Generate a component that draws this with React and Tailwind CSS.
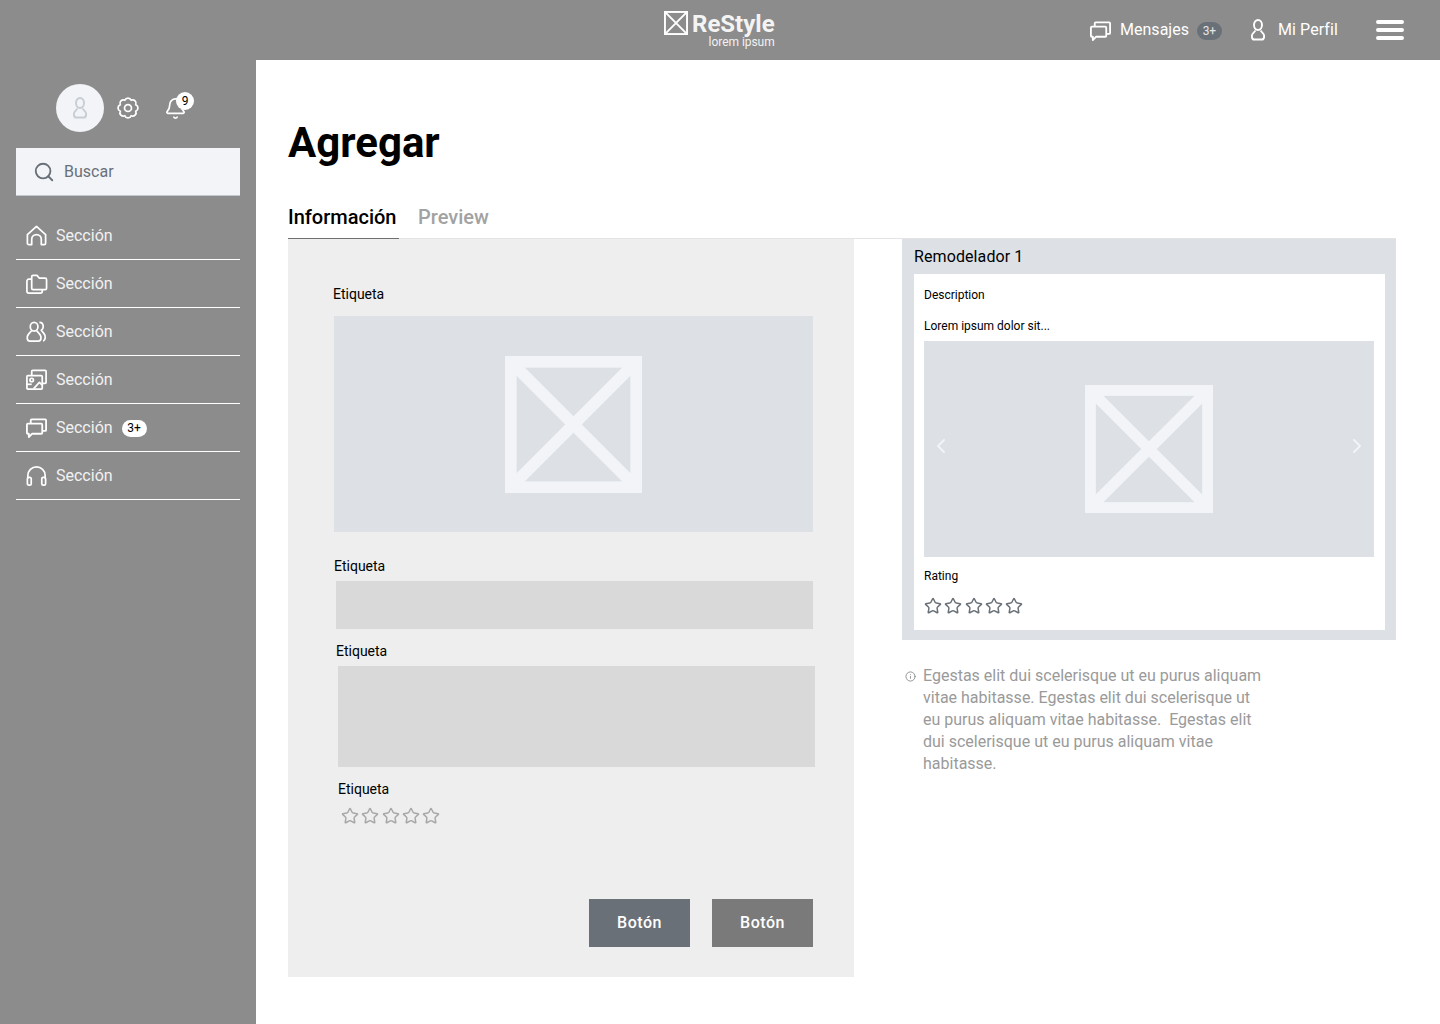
import React from 'react';
import { Search, Bell, ChevronLeft, ChevronRight, Star, Info } from 'lucide-react';

// outline icons from the wireframe kit
const UserIcon = ({ className }) => (
  <svg viewBox="0 0 24 24" fill="none" stroke="currentColor" strokeWidth="1.9" className={className}>
    <ellipse cx="12" cy="7" rx="4" ry="5" />
    <path d="M9.5 12.5 6.5 16c-1 1.3-1 5.5 1.5 5.5h8c2.5 0 2.5-4.2 1.5-5.500L14.500 12.500" strokeLinejoin="round" />
  </svg>
);

const ChatIcon = ({ className }) => (
  <svg viewBox="0 0 24 24" fill="none" stroke="currentColor" strokeWidth="1.9" strokeLinejoin="round" className={className}>
    <path d="M3 8h14a1 1 0 0 1 1 1v8.500a1 1 0 0 1-1 1H7.500L4 22v-3.500H3a1 1 0 0 1-1-1V9a1 1 0 0 1 1-1Z" />
    <path d="M6 8V4.500a1 1 0 0 1 1-1h14a1 1 0 0 1 1 1v10a1 1 0 0 1-1 1h-3" />
  </svg>
);

const HouseIcon = ({ className }) => (
  <svg viewBox="0 0 24 24" fill="none" stroke="currentColor" strokeWidth="1.8" strokeLinejoin="round" className={className}>
    <path d="M2.500 11 12 2.500 21.500 11v9a1.500 1.500 0 0 1-1.500 1.500h-3V16a5 5 0 0 0-10 0v5.500H4A1.500 1.500 0 0 1 2.500 20Z" />
  </svg>
);

const FolderIcon = ({ className }) => (
  <svg viewBox="0 0 24 24" fill="none" stroke="currentColor" strokeWidth="1.8" strokeLinejoin="round" className={className}>
    <path d="M7 5a1.500 1.500 0 0 1 1.500-1.500h4l2.500 3h6a1.500 1.500 0 0 1 1.500 1.500v9a1.500 1.500 0 0 1-1.500 1.500H8.500A1.500 1.500 0 0 1 7 17Z" />
    <path d="M7 7.500H4a2 2 0 0 0-2 2V20a2 2 0 0 0 2 2h12a2 2 0 0 0 2-2v-1.500" />
  </svg>
);

const UsersIcon = ({ className }) => (
  <svg viewBox="0 0 24 24" fill="none" stroke="currentColor" strokeWidth="1.800" strokeLinejoin="round" className={className}>
    <ellipse cx="9.500" cy="7" rx="4" ry="4.500" />
    <path d="M7 11 3.500 15c-2 2.500-1.500 7 1.500 7h9c3 0 3.500-4.500 1.500-7L12 11" />
    <path d="M15 2.500c2.500 0 4 2 4 4.500 0 1.500-.8 3-2 3.700l3 3.800c1.800 2.300 1.500 6.500-1 7.500" />
  </svg>
);

const GalleryIcon = ({ className }) => (
  <svg viewBox="0 0 24 24" fill="none" stroke="currentColor" strokeWidth="1.800" strokeLinejoin="round" className={className}>
    <path d="M7 8V3.500a1 1 0 0 1 1-1h13a1 1 0 0 1 1 1V15a1 1 0 0 1-1 1h-3" />
    <rect x="2" y="8" width="16" height="14" rx="1" />
    <circle cx="7" cy="12.500" r="1.800" />
    <path d="M9 21.500 15 15l3 3" />
    <path d="M2 17h5" />
  </svg>
);

const HeadsetIcon = ({ className }) => (
  <svg viewBox="0 0 24 24" fill="none" stroke="currentColor" strokeWidth="1.800" strokeLinejoin="round" className={className}>
    <path d="M3 15v-3a9 9 0 0 1 18 0v3" />
    <rect x="2.500" y="14" width="4" height="8" rx="1.500" />
    <rect x="17.500" y="14" width="4" height="8" rx="1.500" />
  </svg>
);

// eight lobed cog, the lucide one has square teeth
const gearPath = () => {
  const pts = [...Array(8)].map((_, i) => {
    const a = (i * Math.PI) / 4 + Math.PI / 8;
    return [12 + 9.200 * Math.cos(a), 12 + 9.200 * Math.sin(a)];
  });
  const arcs = [...pts.slice(1), pts[0]].map(p => `A3.800 3.800 0 0 1 ${p[0].toFixed(2)} ${p[1].toFixed(2)}`);
  return `M${pts[0][0].toFixed(2)} ${pts[0][1].toFixed(2)}${arcs.join('')}Z`;
};

const GearIcon = ({ className }) => (
  <svg viewBox="0 0 24 24" fill="none" stroke="currentColor" strokeWidth="1.900" className={className}>
    <path d={gearPath()} />
    <circle cx="12" cy="12" r="3.800" />
  </svg>
);

const Placeholder = ({ size, stroke, color, className }) => (
  <svg viewBox="0 0 100 100" width={size} height={size} fill="none" stroke={color} strokeWidth={stroke} className={className}>
    <rect x={stroke / 2} y={stroke / 2} width={100 - stroke} height={100 - stroke} />
    <path d="M0 0 100 100M100 0 0 100" />
  </svg>
);

const Stars = ({ className }) => (
  <div className={`flex gap-[2.250px] ${className}`}>
    {[0, 1, 2, 3, 4].map(i => (
      <Star key={i} size={18} strokeWidth={2} />
    ))}
  </div>
);

const sections = [
  { icon: HouseIcon },
  { icon: FolderIcon },
  { icon: UsersIcon },
  { icon: GalleryIcon },
  { icon: ChatIcon, badge: '3+' },
  { icon: HeadsetIcon },
];

const Sidebar = () => (
  <aside className="w-[256px] shrink-0 bg-[#8c8c8c] px-4 pt-6">
    <div className="flex items-center pl-10">
      <div className="w-12 h-12 rounded-full bg-[#f2f4f8] flex items-center justify-center">
        <UserIcon className="w-6 h-6 text-[#c8cdd3]" />
      </div>
      <GearIcon className="ml-[13px] w-[22px] h-[22px] text-white" />
      <div className="relative ml-[25px] text-white">
        <Bell size={23} strokeWidth={1.800} />
        <span className="absolute -top-[5px] left-[12px] w-[18px] h-[18px] rounded-full bg-white text-black text-[12px] leading-[18px] text-center">9</span>
      </div>
    </div>
    <div className="mt-4 h-12 bg-[#f2f4f8] border-b border-[#c1c7cd] flex items-center pl-[17px] gap-[9px] text-[#697077]">
      <Search size={22} strokeWidth={2} />
      <span className="text-[16px]">Buscar</span>
    </div>
    <nav className="mt-4">
      {sections.map((s, i) => (
        <div key={i} className="h-12 border-b border-white flex items-center pl-[9px] text-white">
          <s.icon className="w-[23px] h-[23px] shrink-0" />
          <span className="ml-[8px] text-[16px] text-[#f2f2f2]">Sección</span>
          {s.badge && (
            <span className="ml-[9px] mt-[1px] w-[25px] h-[17px] rounded-full bg-white text-black text-[12px] leading-[17px] text-center">{s.badge}</span>
          )}
        </div>
      ))}
    </nav>
  </aside>
);

const Label = ({ children, className }) => (
  <div className={`text-[14px] leading-[16px] text-black ${className}`}>{children}</div>
);

export default function App() {
  return (
    <div className="w-[1440px] h-[1024px] flex flex-col overflow-hidden bg-white font-['Roboto',sans-serif]">
      <header className="h-[60px] shrink-0 bg-[#8c8c8c] flex items-center relative text-white">
        <div className="absolute left-[664px] top-[11px] flex">
          <Placeholder size={24} stroke={8} color="#ffffff" />
          <div className="ml-[4px] pt-[1px] flex flex-col items-end">
            <span className="text-[24px] leading-[24px] font-bold text-[#f4f4f4]">ReStyle</span>
            <span className="text-[12px] leading-[12px] tracking-[-0.05px] text-[#f2f2f2]">lorem ipsum</span>
          </div>
        </div>
        <div className="ml-auto flex items-center pr-9">
          <ChatIcon className="w-[23px] h-[23px]" />
          <span className="ml-[8px] text-[16px]">Mensajes</span>
          <span className="ml-[8px] mt-[1px] w-[25px] h-[18px] rounded-full bg-[#697077] text-[12px] leading-[18px] text-center text-[#e6e6e6]">3+</span>
          <UserIcon className="ml-[24px] w-[24px] h-[24px]" />
          <span className="ml-[8px] text-[16px] tracking-[0.1px]">Mi Perfil</span>
          <svg viewBox="0 0 28 20" width="28" height="20" fill="#ffffff" className="ml-[38px]">
            <rect y="0" width="28" height="4" rx="2" />
            <rect y="8" width="28" height="4" rx="2" />
            <rect y="16" width="28" height="4" rx="2" />
          </svg>
        </div>
      </header>

      <div className="flex flex-1">
        <Sidebar />
        <main className="flex-1 pl-8 pr-11">
          <h1 className="mt-[57px] text-[42px] leading-[52px] font-bold text-black">Agregar</h1>
          <div className="mt-[36px] h-[34px] border-b border-[#e4e4e4] flex text-[20px] font-medium">
            <div className="w-[111px] h-[34px] border-b border-[#6f6f6f] text-black leading-[24px]">Información</div>
            <div className="ml-[19px] text-[#a2a2a2] leading-[24px]">Preview</div>
          </div>

          <div className="flex justify-between items-start">
            <section className="w-[566px] h-[738px] bg-[#eeeeee] pt-[47px] flex flex-col">
              <Label className="ml-[45px]">Etiqueta</Label>
              <div className="ml-[46px] mt-[14px] w-[479px] h-[216px] bg-[#dde0e4] flex items-center justify-center">
                <Placeholder size={137} stroke={8.500} color="#f2f4f8" />
              </div>
              <Label className="ml-[46px] mt-[26px]">Etiqueta</Label>
              <div className="ml-[48px] mt-[7px] w-[477px] h-[48px] bg-[#d9d9d9]" />
              <Label className="ml-[48px] mt-[14px]">Etiqueta</Label>
              <div className="ml-[50px] mt-[7px] w-[477px] h-[101px] bg-[#d9d9d9]" />
              <Label className="ml-[50px] mt-[14px]">Etiqueta</Label>
              <Stars className="ml-[53px] mt-[10px] text-[#a8a8a8]" />
              <div className="mt-[74px] ml-[301px] flex gap-[22px] text-white text-[16px] font-medium tracking-[0.5px]">
                <button className="w-[101px] h-[48px] bg-[#697077]">Botón</button>
                <button className="w-[101px] h-[48px] bg-[#7a7a7a]">Botón</button>
              </div>
            </section>

            <div className="w-[494px]">
              <section className="h-[401px] bg-[#dde1e6] px-[12px] flex flex-col">
                <div className="h-[35px] text-[16px] leading-[35px] text-black tracking-[0.1px]">Remodelador 1</div>
                <div className="w-[471px] h-[356px] bg-white px-[10px] pt-[14px]">
                  <div className="text-[12px] leading-[14px] text-black">Description</div>
                  <div className="mt-[17px] text-[12px] leading-[14px] text-black">Lorem ipsum dolor sit...</div>
                  <div className="relative mt-[8px] w-[450px] h-[216px] bg-[#dde0e4] flex items-center justify-center">
                    <Placeholder size={128} stroke={8.500} color="#f2f4f8" />
                    <ChevronLeft size={24} strokeWidth={2} className="absolute left-[5px] top-[93px] text-[#f2f4f8]" />
                    <ChevronRight size={24} strokeWidth={2} className="absolute right-[5px] top-[93px] text-[#f2f4f8]" />
                  </div>
                  <div className="mt-[12px] text-[12px] leading-[14px] text-black">Rating</div>
                  <Stars className="mt-[14px] text-[#697077]" />
                </div>
              </section>
              <div className="mt-[25px] flex text-[16px] leading-[22px] text-[#9a9a9a]">
                <Info size={11} strokeWidth={2} className="mt-[6px] ml-[3px] shrink-0 text-[#8c8c8c]" />
                <p className="ml-[7px] w-[345px] whitespace-pre-wrap">
                  Egestas elit dui scelerisque ut eu purus aliquam vitae habitasse. Egestas elit dui scelerisque ut eu purus aliquam vitae habitasse.  Egestas elit dui scelerisque ut eu purus aliquam vitae habitasse.
                </p>
              </div>
            </div>
          </div>
        </main>
      </div>
    </div>
  );
}
